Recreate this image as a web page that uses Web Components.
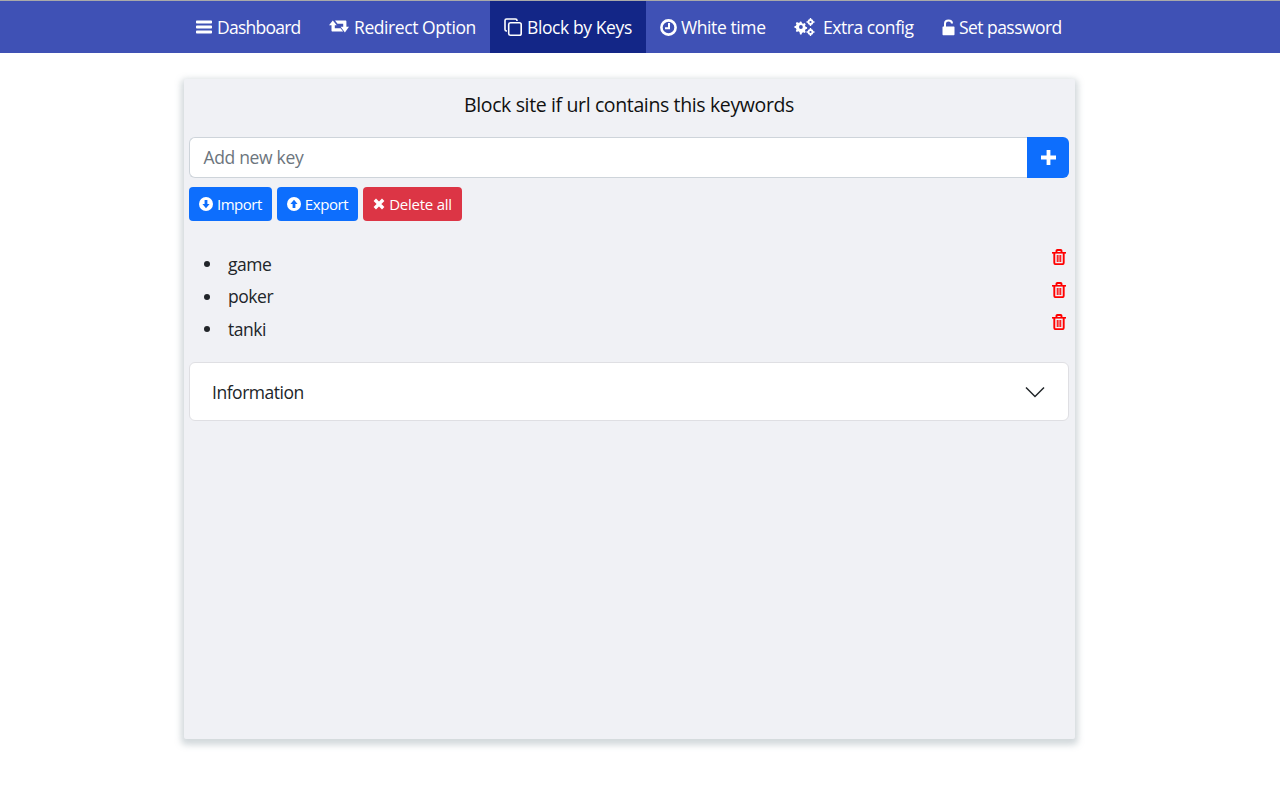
<!DOCTYPE html>
<html><head><meta charset="utf-8"><title>Block by Keys</title>
<style>
html,body{margin:0;padding:0;background:#fff}
body{font-family:"Open Sans","Noto Sans",sans-serif;color:#212529;height:800px;overflow:hidden}
</style></head><body>
<app-nav>
<nav-item width="133" gap="5" style="letter-spacing:-.75px"><svg viewBox="0 0 16 14" width="16" height="14"><path fill="#fff" d="M.8 .5h14.400c.5 0 .8.300.8.800v1.400c0 .5-.3.8-.8.8H.8c-.5 0-.8-.3-.8-.8V1.300C0 .8.300.5.800.5zM.8 5.500h14.400c.5 0 .8.300.8.800v1.400c0 .5-.3.8-.8.8H.8c-.5 0-.8-.3-.8-.8V6.300c0-.5.300-.8.800-.8zM.8 10.500h14.400c.5 0 .8.300.8.800v1.400c0 .5-.3.8-.8.800H.8c-.5 0-.8-.3-.8-.8v-1.400c0-.5.300-.8.800-.8z"/></svg>Dashboard</nav-item>
<nav-item width="175" gap="5" style="letter-spacing:-.42px"><svg viewBox="0 0 20 14" width="20" height="14"><path fill="#fff" d="M3.800.5 7.800 5.200H5.800V8.200H11.600L14.200 11.600H3.500c-.6 0-1-.4-1-1V5.200H0zM6 .6H16.400c.6 0 1 .4 1 1V6.800H20L15.900 12.500 11.600 6.800H14.200V3.800H8.500z"/></svg>Redirect Option</nav-item>
<nav-item width="156" gap="5" active style="letter-spacing:-.4px"><svg viewBox="0 0 18 18" width="18" height="18" fill="none" stroke="#fff" stroke-width="1.600"><path d="M3 13H2.600C1.700 13 1 12.300 1 11.400V2.600C1 1.700 1.700 1 2.600 1h8.800C12.300 1 13 1.700 13 2.600V3"/><rect x="4.700" y="4.700" width="12.500" height="12.500" rx="1.800"/></svg>Block by Keys</nav-item>
<nav-item width="134" gap="4" style="letter-spacing:-.4px"><svg viewBox="0 0 17 17" width="17" height="17"><circle cx="8.500" cy="8.500" r="7.100" fill="none" stroke="#fff" stroke-width="2.600"/><path fill="none" stroke="#fff" stroke-width="2" d="M9 4v5.300H5"/></svg>White time</nav-item>
<nav-item width="148" gap="8" style="letter-spacing:-.45px"><svg viewBox="0 0 21 18" width="21" height="18"><g fill="#fff"><path d="M7.500 4 9 4.200l.5 1.500 1.200.6 1.400-.7 1.100 1.100-.7 1.400.6 1.200 1.500.5v1.500l-1.500.5-.6 1.200.7 1.400-1.100 1.100-1.400-.7-1.200.6-.5 1.500H7.500L7 14.400l-1.200-.6-1.400.7-1.100-1.100.7-1.400-.6-1.200L1.900 10.300V8.800l1.500-.5.6-1.200-.7-1.400 1.100-1.100 1.400.7L7 5.200z" transform="translate(-1.500 -.5)"/><circle cx="16.500" cy="4" r="2.900"/><circle cx="16.500" cy="14" r="2.900"/><path d="M15.800 0h1.400v8h-1.400zM12.500 3.300h8v1.400h-8zM15.800 10h1.400v8h-1.400zM12.500 13.300h8v1.400h-8z"/></g><circle cx="6.900" cy="9" r="1.900" fill="#3f51b5"/><circle cx="16.500" cy="4" r="1.100" fill="#3f51b5"/><circle cx="16.500" cy="14" r="1.100" fill="#3f51b5"/></svg>Extra config</nav-item>
<nav-item width="148" gap="4" style="letter-spacing:-.55px"><svg viewBox="0 0 13 17" width="13" height="17"><path fill="#fff" d="M1.500 7.500h10c.6 0 1 .4 1 1v6.800c0 .6-.4 1-1 1h-10c-.6 0-1-.4-1-1V8.500c0-.6.4-1 1-1z"/><path fill="none" stroke="#fff" stroke-width="2" d="M3 8V4.500C3 2.600 4.500 1.500 6.500 1.500S10 2.600 10 4.500"/></svg>Set password</nav-item>
</app-nav>
<key-card>
<key-input></key-input>
<action-row>
<action-button style="letter-spacing:-.5px"><svg viewBox="0 0 14 14" width="14" height="14"><circle cx="7" cy="7" r="7" fill="#fff"/><path fill="#0d6efd" d="M5.600 3h2.800v4h2.200L7 11.200 3.400 7h2.200z"/></svg>Import</action-button>
<action-button style="letter-spacing:-.4px"><svg viewBox="0 0 14 14" width="14" height="14"><circle cx="7" cy="7" r="7" fill="#fff"/><path fill="#0d6efd" d="M5.600 11h2.800V7h2.200L7 2.800 3.400 7h2.200z"/></svg>Export</action-button>
<action-button danger style="letter-spacing:-.25px"><svg viewBox="0 0 12 12" width="12" height="12"><path fill="none" stroke="#fff" stroke-width="3.400" d="M1.800 1.800l8.400 8.400M10.200 1.800l-8.400 8.400"/></svg>Delete all</action-button>
</action-row>
<key-list>
<key-row>game</key-row><key-row>poker</key-row><key-row>tanki</key-row>
</key-list>
<info-accordion>Information</info-accordion>
</key-card>
<script>
function def(name, css, html, extra){
  customElements.define(name, class extends HTMLElement{
    constructor(){super();const r=this.attachShadow({mode:'open'});r.innerHTML='<style>'+css+'</style>'+html;}
    connectedCallback(){ if(extra) extra(this); }
  });
}
def('app-nav',`:host{display:flex;box-sizing:border-box;height:53px;background:#3f51b5;border-top:1px solid #a9a9a9;padding-left:182px}`,`<slot></slot>`);
def('nav-item',`:host{display:flex;align-items:center;box-sizing:border-box;height:100%;padding-left:14px;color:#fff;font-size:17.500px;white-space:nowrap;flex:none}
:host([active]){background:#132687}
::slotted(svg){flex:none}`,`<slot></slot>`,el=>{el.style.width=el.getAttribute('width')+'px';el.style.gap=el.getAttribute('gap')+'px';});
def('key-card',`:host{display:block;box-sizing:border-box;width:891px;height:660px;margin:26px 0 0 184px;background:#f0f1f5;padding:0 6px 0 5px;box-shadow:0 3px 6px 3px rgba(130,145,155,.35);border-radius:2px}
h1{margin:0;height:58px;box-sizing:border-box;padding-top:12px;font-weight:400;font-size:19.500px;line-height:27px;letter-spacing:-.37px;text-align:center;color:#111}`,`<h1>Block site if url contains this keywords</h1><slot></slot>`);
def('key-input',`:host{display:flex;height:41px}
.f{flex:1;box-sizing:border-box;background:#fff;border:1px solid #ced4da;border-right:0;border-radius:6px 0 0 6px;padding:0 13.500px;font-size:17.500px;letter-spacing:-.33px;line-height:39px;color:#6c757d}
button{width:42px;border:0;background:#0d6efd;border-radius:0 6px 6px 0;padding:0;display:flex;align-items:center;justify-content:center}`,
`<div class="f">Add new key</div><button><svg viewBox="0 0 15 15" width="15" height="15"><path fill="#fff" d="M5.600 0h3.800v5.600H15v3.800H9.400V15H5.600V9.400H0V5.600h5.600z"/></svg></button>`);
def('action-row',`:host{display:flex;gap:5px;margin:9px 0 26.250px}`,`<slot></slot>`);
def('action-button',`:host{display:flex;align-items:center;gap:4px;height:34px;box-sizing:border-box;padding:0 10px;background:#0d6efd;color:#fff;border-radius:4px;font-size:15px;white-space:nowrap}
:host([danger]){background:#dc3545}`,`<slot></slot>`);
def('key-list',`:host{display:block;margin-bottom:17.250px}`,`<slot></slot>`);
def('key-row',`:host{display:flex;align-items:center;justify-content:space-between;height:32.500px;font-size:17.500px;letter-spacing:-.45px;color:#212529;position:relative;padding-left:39px}
.b{position:absolute;left:15px;top:14px;width:6px;height:6px;border-radius:50%;background:#212529}
svg{position:absolute;right:3px;top:2px}`,
`<span class="b"></span><slot></slot><svg viewBox="0 0 14 16" width="14" height="16"><g fill="none" stroke="#f00" stroke-width="1.900"><path d="M0 3.800h14" stroke-width="1.600"/><path d="M4.500 3.500V1.800c0-.5.300-.8.800-.8h3.400c.5 0 .8.300.8.800v1.700"/><path d="M2.300 3.800v10c0 .8.400 1.300 1.100 1.300h7.200c.7 0 1.100-.5 1.100-1.300v-10"/><path d="M5.300 6v7M7 6v7M8.700 6v7" stroke-width="1.100"/></g></svg>`);
def('info-accordion',`:host{display:flex;align-items:center;justify-content:space-between;box-sizing:border-box;height:59px;background:#fff;border:1px solid #dfdfe3;border-radius:6px;padding:0 23px 0 22px;font-size:17.500px;letter-spacing:-.47px;color:#212529}`,
`<slot></slot><svg viewBox="0 0 20 12" width="20" height="12"><path fill="none" stroke="#212529" stroke-width="1.500" d="M1 1.500l9 9 9-9"/></svg>`);
</script>
</body></html>
